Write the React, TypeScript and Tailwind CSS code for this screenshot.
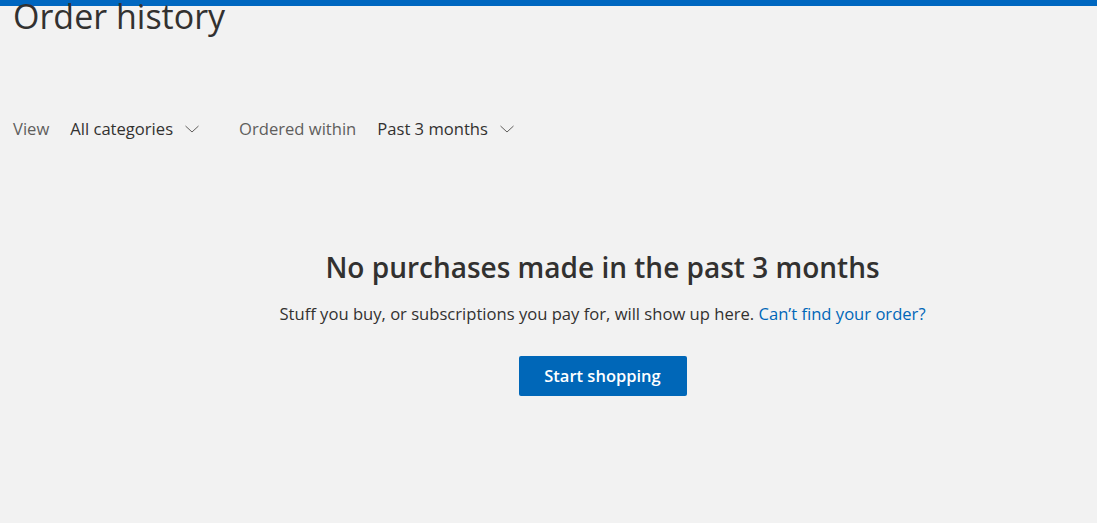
import React from "react";

function Chevron() {
  return (
    <svg width="16" height="16" viewBox="0 0 16 16" fill="none" className="ml-[11px]">
      <path d="M1.5 5 L8 11 L14.5 5" stroke="#605e5c" strokeWidth="1" />
    </svg>
  );
}

export default function App() {
  return (
    <div className="w-[1097px] h-[523px] bg-[#f2f2f2] overflow-hidden text-[#323130]" style={{ fontFamily: '"Open Sans", "Noto Sans", sans-serif' }}>
      <div className="h-[6px] bg-[#0067c0]" />
      <div className="pl-[13px] -mt-[10px]">
        <h1 className="text-[34px] leading-[40px] font-normal text-[#323130]">Order history</h1>
      </div>
      <div className="flex items-center pl-[13px] mt-[81px] h-[24px] text-[16.6px]">
        <span className="text-[#605e5c]">View</span>
        <button className="flex items-center ml-[21px] text-[#323130]">
          All categories
          <Chevron />
        </button>
        <span className="ml-[39px] text-[#605e5c]">Ordered within</span>
        <button className="flex items-center ml-[21px] text-[#323130]">
          Past 3 months
          <Chevron />
        </button>
      </div>
      <div className="flex flex-col items-center pl-[108px] mt-[108px]">
        <h2 className="text-[28px] leading-[36px] font-semibold text-[#323130]">No purchases made in the past 3 months</h2>
        <p className="mt-[17px] text-[16.6px] leading-[24px] text-[#323130]">
          Stuff you buy, or subscriptions you pay for, will show up here.{" "}
          <a className="text-[#0067b8]" href="#">Can’t find your order?</a>
        </p>
        <button className="mt-[30px] w-[168px] h-[40px] bg-[#0067b8] text-white text-[16.5px] font-semibold rounded-[2px]">
          Start shopping
        </button>
      </div>
    </div>
  );
}
